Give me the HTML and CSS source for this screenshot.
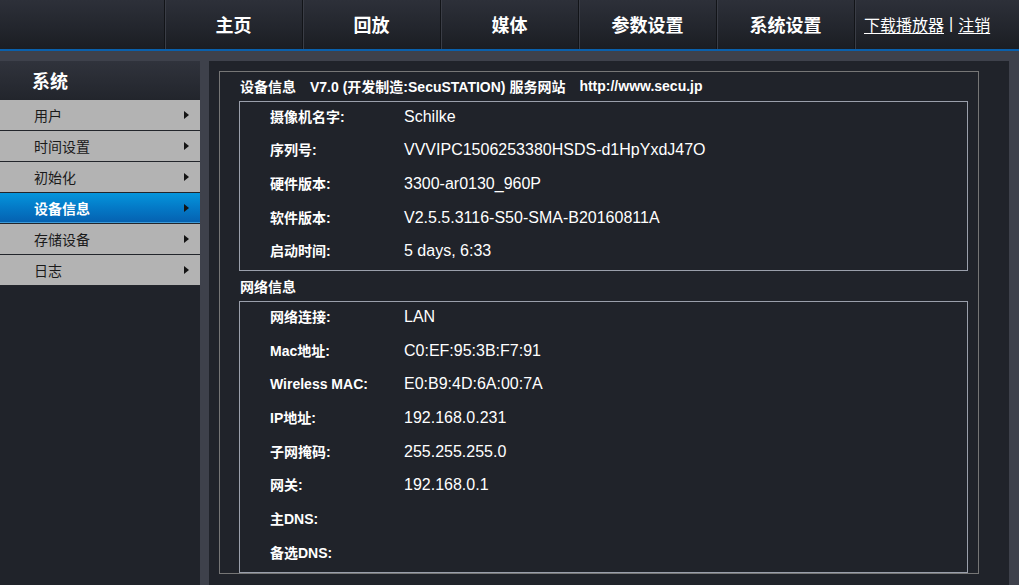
FILE: index.html
```html
<!DOCTYPE html>
<html lang="zh">
<head>
<meta charset="utf-8">
<title>系统设置 - 设备信息</title>
<link rel="stylesheet" href="styles.css">
</head>
<body>
<header class="topbar">
  <div class="brand-space"></div>
  <nav class="nav">
    <a class="nav-item">主页</a>
    <a class="nav-item">回放</a>
    <a class="nav-item">媒体</a>
    <a class="nav-item">参数设置</a>
    <a class="nav-item">系统设置</a>
    <div class="nav-item nav-links"><a class="link">下载播放器</a><span class="pipe">|</span><a class="link">注销</a></div>
  </nav>
</header>
<div class="blueline"></div>
<div class="layout">
  <aside class="sidebar">
    <div class="side-head">系统</div>
    <ul class="side-menu">
      <li class="side-item">用户<span class="arrow"></span></li>
      <li class="side-item">时间设置<span class="arrow"></span></li>
      <li class="side-item">初始化<span class="arrow"></span></li>
      <li class="side-item active">设备信息<span class="arrow"></span></li>
      <li class="side-item">存储设备<span class="arrow"></span></li>
      <li class="side-item">日志<span class="arrow"></span></li>
    </ul>
  </aside>
  <main class="panel">
    <section class="outer">
      <div class="sec-title">设备信息<span class="gap">V7.0 (开发制造:SecuSTATION) 服务网站</span><span class="gap">http://www.secu.jp</span></div>
      <div class="box">
        <div class="row"><span class="lbl">摄像机名字:</span><span class="val">Schilke</span></div>
        <div class="row"><span class="lbl">序列号:</span><span class="val">VVVIPC1506253380HSDS-d1HpYxdJ47O</span></div>
        <div class="row"><span class="lbl">硬件版本:</span><span class="val">3300-ar0130_960P</span></div>
        <div class="row"><span class="lbl">软件版本:</span><span class="val">V2.5.5.3116-S50-SMA-B20160811A</span></div>
        <div class="row"><span class="lbl">启动时间:</span><span class="val">5 days, 6:33</span></div>
      </div>
      <div class="sec-title sec-title-next">网络信息</div>
      <div class="box">
        <div class="row"><span class="lbl">网络连接:</span><span class="val">LAN</span></div>
        <div class="row"><span class="lbl">Mac地址:</span><span class="val">C0:EF:95:3B:F7:91</span></div>
        <div class="row"><span class="lbl">Wireless MAC:</span><span class="val">E0:B9:4D:6A:00:7A</span></div>
        <div class="row"><span class="lbl">IP地址:</span><span class="val">192.168.0.231</span></div>
        <div class="row"><span class="lbl">子网掩码:</span><span class="val">255.255.255.0</span></div>
        <div class="row"><span class="lbl">网关:</span><span class="val">192.168.0.1</span></div>
        <div class="row"><span class="lbl">主DNS:</span><span class="val">&nbsp;</span></div>
        <div class="row"><span class="lbl">备选DNS:</span><span class="val">&nbsp;</span></div>
      </div>
    </section>
  </main>
</div>
</body>
</html>
```
FILE: styles.css
```css
html, body {
  margin: 0;
  padding: 0;
  height: 585px;
  overflow: hidden;
}
body {
  background: #3e414b;
  color: #ffffff;
  font-family: "Liberation Sans", "Noto Sans CJK SC", Arial, sans-serif;
}
.topbar {
  display: flex;
  height: 49px;
  background: linear-gradient(to bottom, #2d3039 0%, #22252c 60%, #1b1d22 100%);
}
.brand-space {
  width: 164px;
  flex: none;
}
.nav {
  display: flex;
  flex: 1;
}
.nav-item {
  width: 138px;
  flex: none;
  border-left: 1px solid #121418;
  box-shadow: inset 1px 0 0 #3a3d46;
  display: flex;
  align-items: center;
  justify-content: center;
  font-size: 18px;
  font-weight: bold;
  color: #ffffff;
  padding-bottom: 2px;
  box-sizing: border-box;
}
.nav-links {
  flex: 1;
  width: auto;
  justify-content: flex-start;
  padding-left: 9px;
  font-weight: normal;
  font-size: 16px;
}
.link {
  text-decoration: underline;
  text-underline-offset: 2px;
}
.pipe {
  margin: 0 5px;
}
.blueline {
  height: 2px;
  background: #0a60ac;
}
.layout {
  display: flex;
  margin-top: 10px;
}
.sidebar {
  width: 200px;
  flex: none;
  height: 524px;
  background: #20232a;
}
.side-head {
  height: 39px;
  box-sizing: border-box;
  padding-left: 32px;
  padding-bottom: 2px;
  display: flex;
  align-items: center;
  font-size: 18px;
  font-weight: bold;
  background: linear-gradient(to bottom, #30333c, #22252c);
}
.side-menu {
  list-style: none;
  margin: 0;
  padding: 0;
}
.side-item {
  border-bottom: 1px solid #22252b;
  background: #b3b3b3;
  color: #1a1a1a;
  font-size: 14px;
  display: flex;
  align-items: center;
  justify-content: space-between;
  padding: 0 11px 1px 34px;
  box-sizing: border-box;
  height: 31px;
}
.side-item.active {
  background: linear-gradient(to bottom, #0595dc 0%, #0479c6 50%, #0560b0 100%);
  box-shadow: inset 0 -1px 0 #3d9ad8;
  color: #ffffff;
  font-weight: bold;
}
.arrow {
  width: 0;
  height: 0;
  border-left: 5px solid #141414;
  border-top: 4px solid transparent;
  border-bottom: 4px solid transparent;
}
.panel {
  margin-left: 9px;
  width: 800px;
  flex: none;
  background: #20232a;
  padding: 10px 0 10px 10px;
  box-sizing: border-box;
  height: 524px;
}
.outer {
  width: 760px;
  box-sizing: border-box;
  border: 1px solid #767676;
  padding: 0 10px 0 19px;
}
.sec-title {
  height: 29px;
  box-sizing: border-box;
  display: flex;
  align-items: center;
  padding-left: 1px;
  font-size: 14px;
  font-weight: bold;
  padding-bottom: 1px;
  white-space: pre;
}
.sec-title-next {
  height: 30px;
}
.gap {
  margin-left: 14px;
}
.box {
  border: 1px solid #9a9fab;
  padding-left: 30px;
}
.row {
  height: 33.7px;
  box-sizing: border-box;
  padding-top: 4.5px;
  display: flex;
  align-items: baseline;
}
.lbl {
  width: 134px;
  flex: none;
  font-size: 14px;
  font-weight: bold;
  line-height: 20px;
}
.val {
  font-size: 16px;
  line-height: 20px;
}
```
